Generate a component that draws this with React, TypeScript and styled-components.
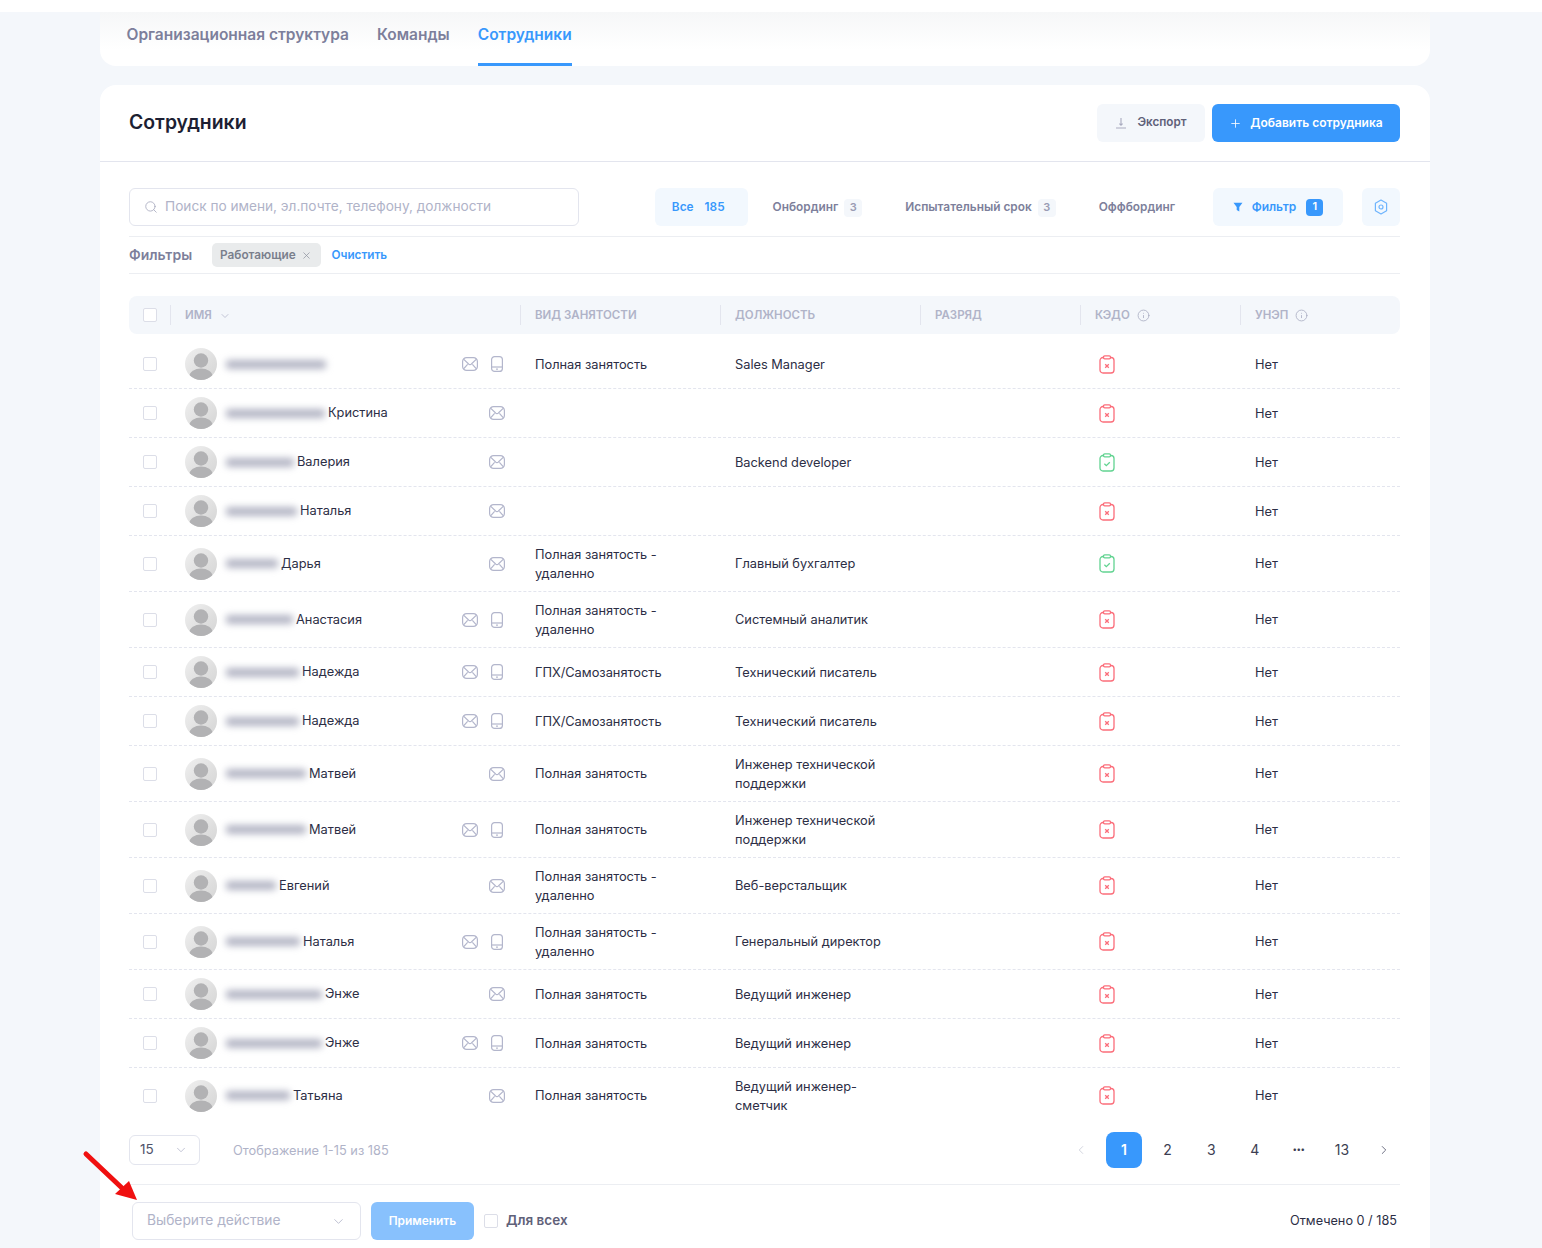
import * as React from 'react';
import styled, { createGlobalStyle } from 'styled-components';
import { ChevronDown, ChevronLeft, ChevronRight, Info, Plus, Search, X } from 'lucide-react';

const GlobalStyle = createGlobalStyle`
  html, body {
    margin: 0;
    padding: 0;
    background: #f4f7fb;
  }
  body {
    font-family: Inter, "Noto Sans", sans-serif;
    font-size: 12.8px;
    line-height: 19.5px;
    color: #2c2e45;
  }
`;

const palette = {
  blue: '#3898fc',
  blueLight: '#f2f8fe',
  border: '#e3e5ee',
  line: '#eceef2',
  muted: '#b0b3c8',
  secondary: '#7d7f9b',
  text: '#2c2e45',
  surface: '#f4f7fb',
};

const Page = styled.div`
  position: relative;
  width: 1542px;
  height: 1248px;
  overflow: hidden;
`;

const TopStrip = styled.div`
  height: 12px;
  background: #fff;
`;

const Container = styled.div`
  width: 1330px;
  margin-left: 100px;
`;

const TabsCard = styled.div`
  display: flex;
  gap: 28px;
  height: 54px;
  padding-left: 26.5px;
  margin-bottom: 19px;
  background: linear-gradient(#f6f7f8, #fff 70%);
  border-radius: 0 0 16px 16px;
`;

const TabLink = styled.div<{ $active?: boolean }>`
  display: flex;
  align-items: center;
  box-sizing: border-box;
  padding-bottom: 6px;
  font-size: 15.5px;
  font-weight: 600;
  color: ${(p) => (p.$active ? palette.blue : palette.secondary)};
  border-bottom: 3px solid ${(p) => (p.$active ? palette.blue : 'transparent')};
`;

const Card = styled.div`
  min-height: 1163px;
  background: #fff;
  border-radius: 16px 16px 0 0;
`;

const CardHeader = styled.div`
  display: flex;
  align-items: center;
  justify-content: space-between;
  height: 76px;
  padding: 0 30px 0 29px;
  border-bottom: 1px solid ${palette.border};
`;

const Heading = styled.h1`
  margin: 0;
  font-size: 19.4px;
  font-weight: 600;
  color: #1d1f33;
`;

const HeaderActions = styled.div`
  display: flex;
  gap: 7px;
`;

const ActionButton = styled.div<{ $primary?: boolean }>`
  display: flex;
  align-items: center;
  justify-content: center;
  gap: ${(p) => (p.$primary ? '8px' : '10px')};
  height: 38px;
  box-sizing: border-box;
  width: ${(p) => (p.$primary ? '188px' : '108px')};
  font-size: ${(p) => (p.$primary ? '12px' : '11.7px')};
  font-weight: 600;
  border-radius: 6px;
  color: ${(p) => (p.$primary ? '#fff' : '#5f6179')};
  background: ${(p) => (p.$primary ? palette.blue : palette.surface)};
`;

const CardBody = styled.div`
  padding: 26px 30px 0 29px;
`;

const Toolbar = styled.div`
  display: flex;
  align-items: center;
  height: 38px;
  margin-bottom: 10px;
`;

const SearchBox = styled.div`
  display: flex;
  align-items: center;
  gap: 7px;
  box-sizing: border-box;
  width: 450px;
  height: 38px;
  padding-left: 14px;
  font-size: 13.65px;
  color: ${palette.muted};
  border: 1px solid ${palette.border};
  border-radius: 6px;
`;

const StatusTabs = styled.div`
  display: flex;
  gap: 7px;
  margin-left: auto;
`;

const StatusTab = styled.div<{ $active?: boolean }>`
  display: flex;
  align-items: center;
  gap: 6px;
  box-sizing: border-box;
  height: 38px;
  padding: ${(p) => (p.$active ? '1px 23px 0 17px' : '1px 18px 0')};
  font-size: 11.85px;
  font-weight: 600;
  border-radius: 6px;
  color: ${(p) => (p.$active ? palette.blue : palette.secondary)};
  background: ${(p) => (p.$active ? palette.blueLight : 'transparent')};
`;

const TabTotal = styled.span`
  margin-left: 5px;
`;

const CountBadge = styled.span`
  display: flex;
  align-items: center;
  justify-content: center;
  width: 18px;
  height: 18px;
  font-size: 11px;
  color: #9a9cb4;
  background: ${palette.surface};
  border-radius: 4px;
`;

const FilterButton = styled.div`
  display: flex;
  align-items: center;
  justify-content: center;
  gap: 9px;
  box-sizing: border-box;
  width: 130px;
  height: 38px;
  margin-left: 20px;
  font-size: 12px;
  font-weight: 600;
  color: ${palette.blue};
  background: ${palette.blueLight};
  border-radius: 6px;
`;

const FilterCount = styled.span`
  display: flex;
  align-items: center;
  justify-content: center;
  width: 17px;
  height: 17px;
  margin-left: 1px;
  font-size: 11px;
  color: #fff;
  background: ${palette.blue};
  border-radius: 4px;
`;

const SettingsButton = styled.div`
  display: flex;
  align-items: center;
  justify-content: center;
  width: 38px;
  height: 38px;
  margin-left: 19px;
  background: ${palette.blueLight};
  border-radius: 6px;
`;

const FiltersRow = styled.div`
  display: flex;
  align-items: center;
  height: 36px;
  margin-bottom: 22px;
  border-top: 1px solid ${palette.line};
  border-bottom: 1px solid ${palette.line};
`;

const FiltersLabel = styled.div`
  width: 83px;
  font-size: 14px;
  font-weight: 600;
  color: ${palette.secondary};
`;

const FilterChip = styled.div`
  display: flex;
  align-items: center;
  gap: 5px;
  box-sizing: border-box;
  width: 109px;
  height: 24px;
  padding: 1px 0 0 8px;
  font-size: 11.8px;
  font-weight: 600;
  color: #7a7f8c;
  background: #e9ebec;
  border-radius: 5px;
`;

const ClearLink = styled.div`
  margin: 1px 0 0 10.5px;
  font-size: 11.7px;
  font-weight: 600;
  color: ${palette.blue};
`;

const columns = '41px 350px 200px 200px 160px 160px 160px';

const TableHead = styled.div`
  display: grid;
  grid-template-columns: ${columns};
  align-items: center;
  height: 38px;
  margin-bottom: 6px;
  background: ${palette.surface};
  border-radius: 8px;
`;

const HeadCell = styled.div`
  display: flex;
  align-items: center;
  gap: 7px;
  box-sizing: border-box;
  height: 20px;
  padding: 1px 0 0 14px;
  font-size: 11.5px;
  font-weight: 600;
  color: ${palette.muted};
  border-left: 1px solid ${palette.border};
`;

const CheckCell = styled.div`
  display: flex;
  padding-left: 14px;
`;

const Checkbox = styled.span`
  display: block;
  box-sizing: border-box;
  width: 14px;
  height: 14px;
  flex-shrink: 0;
  background: #fff;
  border: 1px solid #dcdee8;
  border-radius: 2px;
`;

const Row = styled.div<{ $last?: boolean }>`
  display: grid;
  grid-template-columns: ${columns};
  align-items: center;
  padding: 8px 0;
  border-bottom: 1px dashed ${(p) => (p.$last ? 'transparent' : palette.border)};
`;

const NameCell = styled.div`
  display: flex;
  align-items: center;
  padding: 0 15px;
`;

const Blurred = styled.span<{ $w: number }>`
  display: block;
  flex-shrink: 0;
  width: ${(p) => p.$w}px;
  height: 9px;
  margin: 0 3px 0 9px;
  background: #b4b6c5;
  border-radius: 3px;
  filter: blur(3.5px);
`;

const ContactIcons = styled.div`
  display: flex;
  align-items: center;
  gap: 11px;
  margin-left: auto;
`;

const Cell = styled.div`
  padding: 0.5px 30px 0.5px 15px;
  line-height: 19px;
`;

const PositionCell = styled(Cell)`
  padding-right: 20px;
`;

const IconCell = styled.div`
  display: flex;
  padding-left: 19px;
`;

const PaginationRow = styled.div`
  display: flex;
  align-items: center;
  height: 36px;
  margin-top: 8px;
  padding-bottom: 16px;
  border-bottom: 1px solid ${palette.line};
`;

const PageSize = styled.div`
  display: flex;
  align-items: center;
  justify-content: space-between;
  box-sizing: border-box;
  width: 71px;
  height: 30px;
  padding: 0 11px 0 10px;
  font-size: 13.5px;
  color: #50526a;
  border: 1px solid ${palette.border};
  border-radius: 6px;
`;

const ShownText = styled.div`
  margin: 1px 0 0 33px;
  color: ${palette.muted};
`;

const Pager = styled.div`
  display: flex;
  align-items: center;
  margin-left: auto;
  margin-right: 7px;
`;

const PagerArrow = styled.div<{ $left?: boolean }>`
  display: flex;
  justify-content: center;
  width: 18px;
  margin: ${(p) => (p.$left ? '0 16px 0 0' : '0 0 0 7.4px')};
`;

const PageNumber = styled.div<{ $active?: boolean }>`
  display: flex;
  align-items: center;
  justify-content: center;
  width: 36px;
  height: 36px;
  margin-right: 7.6px;
  font-size: 14px;
  font-weight: ${(p) => (p.$active ? 600 : 400)};
  color: ${(p) => (p.$active ? '#fff' : '#3c3e52')};
  background: ${(p) => (p.$active ? palette.blue : 'transparent')};
  border-radius: 8px;
`;

const PageDots = styled(PageNumber)`
  font-size: 8px;
  letter-spacing: -0.5px;
`;

const BulkRow = styled.div`
  display: flex;
  align-items: center;
  height: 38px;
  padding: 17px 3px 0 3px;
`;

const ActionSelect = styled.div`
  display: flex;
  align-items: center;
  justify-content: space-between;
  box-sizing: border-box;
  width: 229px;
  height: 38px;
  padding: 0 14px;
  font-size: 13.8px;
  color: ${palette.muted};
  border: 1px solid ${palette.border};
  border-radius: 6px;
`;

const ApplyButton = styled.div`
  display: flex;
  align-items: center;
  justify-content: center;
  box-sizing: border-box;
  width: 103px;
  height: 38px;
  margin: 0 10px;
  font-size: 11.9px;
  font-weight: 600;
  color: #fff;
  background: #88c1fd;
  border-radius: 6px;
`;

const ForAll = styled.div`
  margin-left: 8px;
  font-size: 13.5px;
  font-weight: 600;
  color: #5f6179;
`;

const CheckedCount = styled.div`
  margin-left: auto;
  font-size: 12.7px;
`;

const ArrowOverlay = styled.svg`
  position: absolute;
  left: 80px;
  top: 1148px;
`;

const MailIcon = () => (
  <svg width="16" height="14" viewBox="0 0 16 14" fill="none" stroke="#b3b6cc" strokeWidth="1.2">
    <rect x="0.6" y="0.6" width="14.8" height="12.8" rx="4" />
    <path d="M1.8 2.4 6.4 6.8c.9.9 2.3.9 3.2 0l4.6-4.4M1.8 11.6 5.6 7.4M14.2 11.6 10.4 7.4" />
  </svg>
);

const PhoneIcon = () => (
  <svg width="16" height="16" viewBox="0 0 16 16" fill="none" stroke="#b3b6cc" strokeWidth="1.2">
    <rect x="2.6" y="0.6" width="10.8" height="14.8" rx="3" />
    <path d="M2.6 11h10.8" />
    <circle cx="8" cy="13.2" r="0.3" />
  </svg>
);

const Avatar = () => (
  <svg width="32" height="32" viewBox="0 0 32 32">
    <defs>
      <linearGradient id="avatarBg" x1="0" y1="0" x2="1" y2="1">
        <stop offset="0" stopColor="#f0f0f0" />
        <stop offset="1" stopColor="#d4d4d4" />
      </linearGradient>
      <clipPath id="avatarClip">
        <circle cx="16" cy="16" r="16" />
      </clipPath>
    </defs>
    <circle cx="16" cy="16" r="16" fill="url(#avatarBg)" />
    <g clipPath="url(#avatarClip)" fill="#b2b2b4">
      <circle cx="16" cy="12.5" r="7.2" />
      <ellipse cx="16" cy="28" rx="11.5" ry="7.5" />
    </g>
  </svg>
);

const KedoIcon: React.FC<{ ok: boolean }> = ({ ok }) => {
  const color = ok ? '#62d391' : '#fb6d7a';
  return (
    <svg width="16" height="19" viewBox="0 0 16 19" fill="none" stroke={color} strokeWidth="1.3">
      <rect x="1" y="2.5" width="14" height="15.5" rx="3" />
      <rect x="4.5" y="0.8" width="7" height="3" rx="1.2" fill="#fff" />
      {ok ? (
        <path d="M5.4 10.8 7.3 12.6 10.8 9.2" />
      ) : (
        <path d="M6.2 9.2 9.8 12.8M9.8 9.2 6.2 12.8" />
      )}
    </svg>
  );
};

const employees = [
  { name: '', blur: 100, job: 'Полная занятость', position: 'Sales Manager', phone: true },
  { name: 'Кристина', blur: 99, job: '', position: '', phone: false },
  { name: 'Валерия', blur: 68, job: '', position: 'Backend developer', phone: false, ok: true },
  { name: 'Наталья', blur: 71, job: '', position: '', phone: false },
  { name: 'Дарья', blur: 52, job: 'Полная занятость - удаленно', position: 'Главный бухгалтер', phone: false, ok: true },
  { name: 'Анастасия', blur: 67, job: 'Полная занятость - удаленно', position: 'Системный аналитик', phone: true },
  { name: 'Надежда', blur: 73, job: 'ГПХ/Самозанятость', position: 'Технический писатель', phone: true },
  { name: 'Надежда', blur: 73, job: 'ГПХ/Самозанятость', position: 'Технический писатель', phone: true },
  { name: 'Матвей', blur: 80, job: 'Полная занятость', position: 'Инженер технической поддержки', phone: false },
  { name: 'Матвей', blur: 80, job: 'Полная занятость', position: 'Инженер технической поддержки', phone: true },
  { name: 'Евгений', blur: 50, job: 'Полная занятость - удаленно', position: 'Веб-верстальщик', phone: false },
  { name: 'Наталья', blur: 74, job: 'Полная занятость - удаленно', position: 'Генеральный директор', phone: true },
  { name: 'Энже', blur: 96, job: 'Полная занятость', position: 'Ведущий инженер', phone: false },
  { name: 'Энже', blur: 96, job: 'Полная занятость', position: 'Ведущий инженер', phone: true },
  { name: 'Татьяна', blur: 64, job: 'Полная занятость', position: 'Ведущий инженер-сметчик', phone: false },
];

const headInfo = <Info size={13} color="#a9acc2" strokeWidth={1.5} />;

export default function App() {
  return (
    <Page>
      <GlobalStyle />
      <TopStrip />
      <Container>
        <TabsCard>
          <TabLink>Организационная структура</TabLink>
          <TabLink>Команды</TabLink>
          <TabLink $active>Сотрудники</TabLink>
        </TabsCard>
        <Card>
          <CardHeader>
            <Heading>Сотрудники</Heading>
            <HeaderActions>
              <ActionButton>
                <svg width="12" height="12" viewBox="0 0 12 12" fill="none" stroke="#a9abbf" strokeWidth="1.1">
                  <path d="M6 1v7M4.4 6.6 6 8.2l1.6-1.6M1 11h10" />
                </svg>
                Экспорт
              </ActionButton>
              <ActionButton $primary>
                <Plus size={13} strokeWidth={1.5} />
                Добавить сотрудника
              </ActionButton>
            </HeaderActions>
          </CardHeader>
          <CardBody>
            <Toolbar>
              <SearchBox>
                <Search size={14} color="#a5a8bd" strokeWidth={1.4} />
                Поиск по имени, эл.почте, телефону, должности
              </SearchBox>
              <StatusTabs>
                <StatusTab $active>
                  Все <TabTotal>185</TabTotal>
                </StatusTab>
                <StatusTab>
                  Онбординг <CountBadge>3</CountBadge>
                </StatusTab>
                <StatusTab>
                  Испытательный срок <CountBadge>3</CountBadge>
                </StatusTab>
                <StatusTab>Оффбординг</StatusTab>
              </StatusTabs>
              <FilterButton>
                <svg width="10" height="10" viewBox="0 0 10 10" fill={palette.blue}>
                  <path d="M.5.8h9L6.3 5v4.4L3.7 8V5z" />
                </svg>
                Фильтр
                <FilterCount>1</FilterCount>
              </FilterButton>
              <SettingsButton>
                <svg width="14" height="16" viewBox="0 0 14 16" fill="none" stroke="#6eb4fd" strokeWidth="1.2">
                  <path d="M7 1 12.6 4.2v7.6L7 15 1.4 11.8V4.2z" strokeLinejoin="round" />
                  <circle cx="7" cy="8" r="2" />
                </svg>
              </SettingsButton>
            </Toolbar>
            <FiltersRow>
              <FiltersLabel>Фильтры</FiltersLabel>
              <FilterChip>
                Работающие
                <X size={11} color="#8f939f" strokeWidth={1.6} />
              </FilterChip>
              <ClearLink>Очистить</ClearLink>
            </FiltersRow>
            <TableHead>
              <CheckCell>
                <Checkbox />
              </CheckCell>
              <HeadCell>
                ИМЯ <ChevronDown size={12} strokeWidth={1.5} />
              </HeadCell>
              <HeadCell>ВИД ЗАНЯТОСТИ</HeadCell>
              <HeadCell>ДОЛЖНОСТЬ</HeadCell>
              <HeadCell>РАЗРЯД</HeadCell>
              <HeadCell>КЭДО {headInfo}</HeadCell>
              <HeadCell>УНЭП {headInfo}</HeadCell>
            </TableHead>
            {employees.map((item, index) => (
              <Row key={index} $last={index === employees.length - 1}>
                <CheckCell>
                  <Checkbox />
                </CheckCell>
                <NameCell>
                  <Avatar />
                  <Blurred $w={item.blur} />
                  {item.name}
                  <ContactIcons>
                    <MailIcon />
                    {item.phone && <PhoneIcon />}
                  </ContactIcons>
                </NameCell>
                <Cell>{item.job}</Cell>
                <PositionCell>{item.position}</PositionCell>
                <div />
                <IconCell>
                  <KedoIcon ok={Boolean(item.ok)} />
                </IconCell>
                <Cell>Нет</Cell>
              </Row>
            ))}
            <PaginationRow>
              <PageSize>
                15
                <ChevronDown size={14} color="#b0b3c8" strokeWidth={1.3} />
              </PageSize>
              <ShownText>Отображение 1-15 из 185</ShownText>
              <Pager>
                <PagerArrow $left>
                  <ChevronLeft size={14} color="#c9cbd8" strokeWidth={1.4} />
                </PagerArrow>
                <PageNumber $active>1</PageNumber>
                <PageNumber>2</PageNumber>
                <PageNumber>3</PageNumber>
                <PageNumber>4</PageNumber>
                <PageDots>•••</PageDots>
                <PageNumber>13</PageNumber>
                <PagerArrow>
                  <ChevronRight size={14} color="#50526a" strokeWidth={1.4} />
                </PagerArrow>
              </Pager>
            </PaginationRow>
            <BulkRow>
              <ActionSelect>
                Выберите действие
                <ChevronDown size={15} color="#b0b3c8" strokeWidth={1.3} />
              </ActionSelect>
              <ApplyButton>Применить</ApplyButton>
              <Checkbox />
              <ForAll>Для всех</ForAll>
              <CheckedCount>Отмечено 0 / 185</CheckedCount>
            </BulkRow>
          </CardBody>
        </Card>
      </Container>
      <ArrowOverlay width="60" height="56" viewBox="0 0 60 56">
        <path d="M6 6 L42 40" stroke="#f01010" strokeWidth="5" strokeLinecap="round" />
        <path d="M57 52 L35 46 L49 33 Z" fill="#f01010" />
      </ArrowOverlay>
    </Page>
  );
}
